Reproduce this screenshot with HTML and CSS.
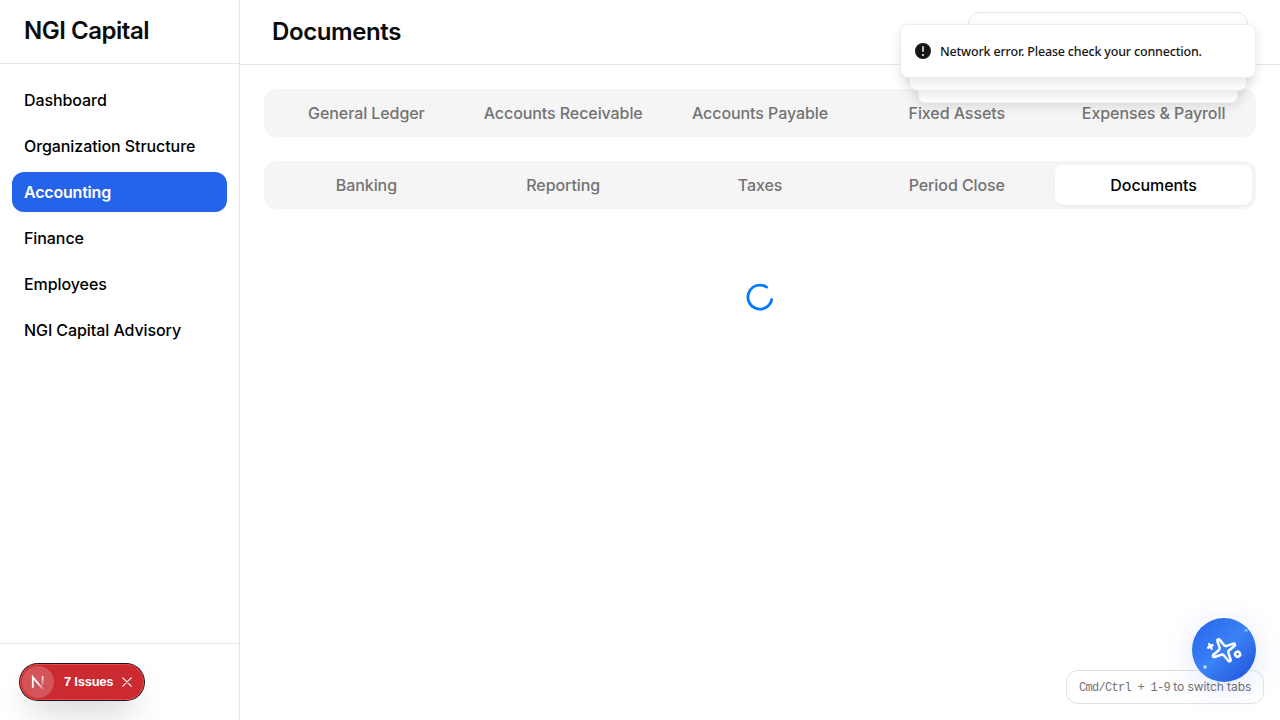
FILE: index.html
```
<!DOCTYPE html>
<html lang="en">
<head>
<meta charset="utf-8">
<title>NGI Capital</title>
<link rel="stylesheet" href="styles.css">
</head>
<body>
<div class="app">
  <aside class="sidebar">
    <div class="brand">NGI Capital</div>
    <nav class="nav">
      <a class="nav-item">Dashboard</a>
      <a class="nav-item">Organization Structure</a>
      <a class="nav-item active">Accounting</a>
      <a class="nav-item">Finance</a>
      <a class="nav-item">Employees</a>
      <a class="nav-item">NGI Capital Advisory</a>
    </nav>
    <div class="sidebar-footer"></div>
  </aside>
  <main class="main">
    <header class="header"><h1 class="title">Documents</h1><div class="selector"></div></header>
    <div class="content">
      <div class="tabs">
        <span class="tab">General Ledger</span><span class="tab">Accounts Receivable</span><span class="tab">Accounts Payable</span><span class="tab">Fixed Assets</span><span class="tab">Expenses &amp; Payroll</span>
      </div>
      <div class="tabs">
        <span class="tab">Banking</span><span class="tab">Reporting</span><span class="tab">Taxes</span><span class="tab">Period Close</span><span class="tab selected">Documents</span>
      </div>
      <div class="loading">
        <svg width="32" height="32" viewBox="0 0 32 32" fill="none" stroke="#007aff" stroke-width="2.8" stroke-linecap="round"><path d="M22.6 6.1A12 12 0 1 0 27.7 18.5"/></svg>
      </div>
    </div>
  </main>
</div>

<div class="hint"><span class="keys">Cmd/Ctrl + 1-9</span> to switch tabs</div>

<div class="assistant">
  <svg width="64" height="64" viewBox="0 0 64 64" fill="none">
    <g transform="translate(32 32.3) rotate(-119) scale(1.25) translate(-12 -12)" stroke="#fff" stroke-width="2" stroke-linecap="round" stroke-linejoin="round">
      <path d="M11.017 2.814a1 1 0 0 1 1.966 0l1.051 5.558a2 2 0 0 0 1.594 1.594l5.558 1.051a1 1 0 0 1 0 1.966l-5.558 1.051a2 2 0 0 0-1.594 1.594l-1.051 5.558a1 1 0 0 1-1.966 0l-1.051-5.558a2 2 0 0 0-1.594-1.594l-5.558-1.051a1 1 0 0 1 0-1.966l5.558-1.051a2 2 0 0 0 1.594-1.594z"/>
      <path d="M20 2v4M22 4h-4"/><circle cx="4" cy="20" r="2"/>
    </g>
    <circle cx="13" cy="49" r="1.7" fill="#fff" opacity=".75"/>
    <circle cx="54" cy="12.5" r="1.8" fill="#fff" opacity=".35"/>
  </svg>
</div>

<div class="toast third"></div>
<div class="toast second"></div>
<div class="toast front">
  <svg width="20" height="20" viewBox="0 0 20 20" fill="#171717"><path fill-rule="evenodd" d="M18 10a8 8 0 1 1-16 0 8 8 0 0 1 16 0zm-8-5a.75.75 0 0 1 .75.75v4.5a.75.75 0 0 1-1.5 0v-4.5A.75.75 0 0 1 10 5zm0 10a1 1 0 1 0 0-2 1 1 0 0 0 0 2z"/></svg>
  <span class="message">Network error. Please check your connection.</span>
</div>

<div class="issues">
  <span class="logo">
    <svg width="32" height="32" viewBox="0 0 32 32" fill="none" stroke-width="1.8">
      <defs>
        <linearGradient id="diagonal" x1="18" y1="17" x2="22" y2="23" gradientUnits="userSpaceOnUse"><stop stop-color="#fff"/><stop offset="1" stop-color="#fff" stop-opacity=".1"/></linearGradient>
        <linearGradient id="stem" x1="20" y1="10" x2="20" y2="20" gradientUnits="userSpaceOnUse"><stop stop-color="#fff"/><stop offset="1" stop-color="#fff" stop-opacity=".1"/></linearGradient>
      </defs>
      <path d="M10.8 21.8V11.2L21.2 23.4" stroke="url(#diagonal)"/><path d="M20.6 10.2v9.6" stroke="url(#stem)"/>
    </svg>
  </span>
  <span class="count">7 Issues</span>
  <svg width="10" height="10" viewBox="0 0 10 10" fill="none" stroke="#fff" stroke-width="1.2" stroke-linecap="round"><path d="M.8.8l8.4 8.4M9.2.8L.8 9.2"/></svg>
</div>
</body>
</html>
```
FILE: styles.css
```
* { box-sizing: border-box; }
body { margin: 0; background: #fff; color: #0a0a0a; font: 16px/24px Inter, sans-serif; overflow: hidden; }
svg { display: block; flex: none; }
.app { display: flex; height: 720px; }
.sidebar { width: 240px; border-right: 1px solid #e5e5e5; display: flex; flex-direction: column; flex: none; }
.brand { height: 64px; padding: 15px 24px 0; border-bottom: 1px solid #e5e5e5; font-size: 24px; line-height: 32px; font-weight: 600; letter-spacing: -0.48px; }
.nav { flex: 1; padding: 16px 12px; display: flex; flex-direction: column; gap: 6px; }
.nav-item { height: 40px; padding: 8px 12px; border-radius: 12px; font-weight: 500; letter-spacing: -0.08px; color: #000; }
.nav-item.active { background: #2563eb; color: #fff; font-weight: 600; letter-spacing: -0.2px; }
.sidebar-footer { height: 77px; border-top: 1px solid #e5e5e5; }
.main { flex: 1; min-width: 0; }
.header { height: 65px; border-bottom: 1px solid #e5e5e5; padding: 0 32px; display: flex; align-items: center; justify-content: space-between; }
.title { margin: 0; font-size: 24px; line-height: 32px; font-weight: 600; letter-spacing: -0.4px; }
.selector { width: 280px; height: 40px; border: 1px solid #e5e5e5; border-radius: 12px; }
.content { padding: 24px; display: flex; flex-direction: column; gap: 24px; }
.tabs { height: 48px; padding: 4px; background: #f5f5f5; border-radius: 12px; display: grid; grid-template-columns: repeat(5, 1fr); }
.tab { text-align: center; line-height: 40px; font-weight: 500; letter-spacing: -0.08px; color: #737373; border-radius: 8px; white-space: nowrap; }
.tab.selected { background: #fff; color: #000; box-shadow: 0 1px 2px rgba(0,0,0,.06); }
.loading { display: flex; justify-content: center; padding-top: 48px; }
.hint { position: absolute; right: 16px; bottom: 16px; width: 198px; height: 34px; padding: 8px 0 0 12px; border: 1px solid #e2e2e4; border-radius: 12px; font-size: 12px; line-height: 16px; letter-spacing: -0.08px; color: #737373; white-space: nowrap; background: #fff; }
.keys { font-family: "Liberation Mono", monospace; font-size: 12px; letter-spacing: -0.7px; }
.assistant { position: absolute; left: 1192px; top: 618px; width: 64px; height: 64px; border-radius: 50%; background: linear-gradient(135deg, #2563eb, #3b82f6 50%, #1d4ed8); box-shadow: 0 8px 32px rgba(37,99,235,.13), 0 0 32px rgba(37,99,235,.03); }
.toast { position: absolute; left: 900px; top: 24px; width: 356px; height: 54px; background: #fff; border: 1px solid #ededed; border-radius: 8px; box-shadow: 0 4px 12px rgba(0,0,0,.1); }
.toast.third { transform: translateY(28px) scale(.9); }
.toast.second { transform: translateY(14px) scale(.95); }
.toast.front { display: flex; align-items: center; gap: 7px; padding: 0 12px; font: 500 12.5px/20px "Noto Sans", sans-serif; letter-spacing: -0.18px; color: #171717; white-space: nowrap; }
.message { padding-top: 2px; }
.issues { position: absolute; left: 20px; top: 664px; width: 124px; height: 36px; padding: 0 12px 0 2px; border-radius: 18px; background: #ca2a30; display: flex; align-items: center; color: #fff; box-shadow: 0 0 0 1px #171717, inset 0 0 0 1px #e5484d, 0 16px 32px -8px rgba(0,0,0,.24); }
.logo { width: 32px; height: 32px; border-radius: 50%; background: rgba(255,255,255,.2); }
.count { flex: 1; padding-left: 10px; font: 600 13px/20px "Liberation Sans", sans-serif; letter-spacing: -0.25px; white-space: nowrap; }
```
